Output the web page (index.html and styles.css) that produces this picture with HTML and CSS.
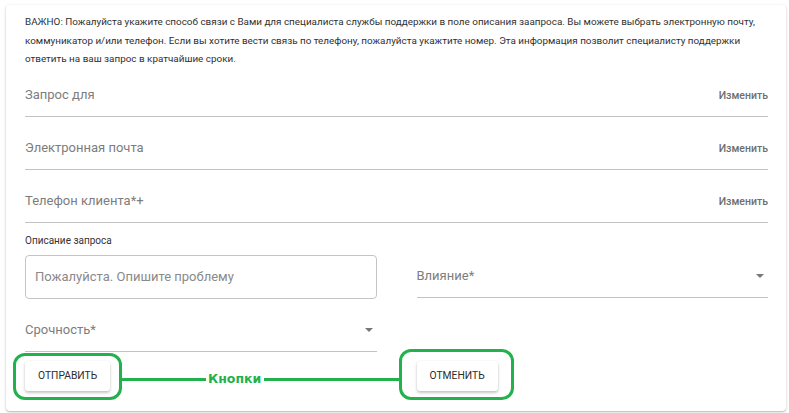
FILE: index.html
```html
<!DOCTYPE html>
<html lang="ru">
<head>
<meta charset="utf-8">
<title>Запрос в поддержку</title>
<link rel="stylesheet" href="styles.css">
</head>
<body>
<div class="card">
  <p class="notice">ВАЖНО: Пожалуйста укажите способ связи с Вами для специалиста службы поддержки в поле описания заапроса. Вы можете выбрать электронную почту, коммуникатор и/или телефон. Если вы хотите вести связь по телефону, пожалуйста укажтите номер. Эта информация позволит специалисту поддержки ответить на ваш запрос в кратчайшие сроки.</p>

  <div class="field first">
    <span class="field-label">Запрос для</span>
    <span class="field-action">Изменить</span>
  </div>
  <div class="field">
    <span class="field-label">Электронная почта</span>
    <span class="field-action">Изменить</span>
  </div>
  <div class="field">
    <span class="field-label">Телефон клиента*+</span>
    <span class="field-action">Изменить</span>
  </div>

  <div class="desc-label">Описание запроса</div>

  <div class="grid">
    <div class="textarea">Пожалуйста. Опишите проблему</div>
    <div class="field select compact">
      <span class="field-label">Влияние*</span>
      <span class="caret"></span>
    </div>
    <div class="field select">
      <span class="field-label">Срочность*</span>
      <span class="caret"></span>
    </div>
    <div></div>
    <div class="btn-cell"><button class="btn">ОТПРАВИТЬ</button></div>
    <div class="btn-cell"><button class="btn">ОТМЕНИТЬ</button></div>
  </div>
</div>

<div class="mark mark-left"></div>
<div class="mark mark-right"></div>
<div class="mark-line line-a"></div>
<div class="mark-line line-b"></div>
<div class="mark-label">Кнопки</div>
</body>
</html>
```

FILE: styles.css
```css
html, body {
  margin: 0;
  padding: 0;
  background: #ffffff;
}

body {
  padding: 5px 3px 2px 6px;
  font-family: Roboto, "Liberation Sans", sans-serif;
  color: #333;
}

.card {
  width: 780px;
  height: 406px;
  box-sizing: border-box;
  padding: 8px 18px 0 19px;
  background: #fff;
  border-radius: 4px;
  box-shadow: 0 1px 3px rgba(0, 0, 0, 0.22), 0 1px 1px rgba(0, 0, 0, 0.1);
}

.notice {
  margin: 0;
  font-size: 9.9px;
  letter-spacing: 0;
  line-height: 18.5px;
  color: #303030;
}

.field {
  display: flex;
  align-items: flex-end;
  justify-content: space-between;
  padding: 22px 0 12px;
  border-bottom: 1px solid #c2c2c2;
}

.field.first {
  padding-top: 17px;
}

.field-label {
  font-size: 13px;
  line-height: 18px;
  color: #7d7d7d;
}

.field-action {
  font-size: 10.5px;
  line-height: 16px;
  font-weight: 500;
  color: #6e6e6e;
}

.desc-label {
  margin-top: 11px;
  font-size: 10px;
  line-height: 14px;
  color: #333;
}

.grid {
  display: grid;
  grid-template-columns: 1fr 1fr;
  column-gap: 40px;
  margin-top: 7px;
  align-items: start;
}

.textarea {
  height: 44px;
  box-sizing: border-box;
  border: 1px solid #c4c4c4;
  border-radius: 4px;
  padding: 12px 9px;
  font-size: 13px;
  line-height: 18px;
  color: #8a8a8a;
}

.select {
  align-items: center;
}

.select.compact {
  padding-top: 12px;
}

.caret {
  width: 0;
  height: 0;
  margin-right: 4px;
  border-left: 4.5px solid transparent;
  border-right: 4.5px solid transparent;
  border-top: 4.5px solid #777;
}

.btn-cell {
  padding-top: 9px;
}

.btn {
  height: 30px;
  padding: 0 13px;
  border: none;
  border-radius: 3px;
  background: #fff;
  font-family: Roboto, "Liberation Sans", sans-serif;
  font-size: 10.3px;
  color: #2b2b2b;
  box-shadow: 0 2px 3px rgba(0, 0, 0, 0.22), 0 0 2px rgba(0, 0, 0, 0.08);
}

/* annotation overlay */
.mark {
  position: absolute;
  box-sizing: border-box;
  border: 3px solid #22b14c;
  border-radius: 12px;
}

.mark-left {
  left: 13px;
  top: 353px;
  width: 109px;
  height: 47px;
}

.mark-right {
  left: 399px;
  top: 349px;
  width: 115px;
  height: 51px;
}

.mark-line {
  position: absolute;
  top: 378px;
  height: 3px;
  background: #22b14c;
}

.line-a {
  left: 121px;
  width: 85px;
}

.line-b {
  left: 264px;
  width: 136px;
}

.mark-label {
  position: absolute;
  left: 208px;
  top: 370px;
  font-family: "DejaVu Sans", sans-serif;
  font-weight: bold;
  font-size: 12.5px;
  line-height: 18px;
  color: #22b14c;
}
```
